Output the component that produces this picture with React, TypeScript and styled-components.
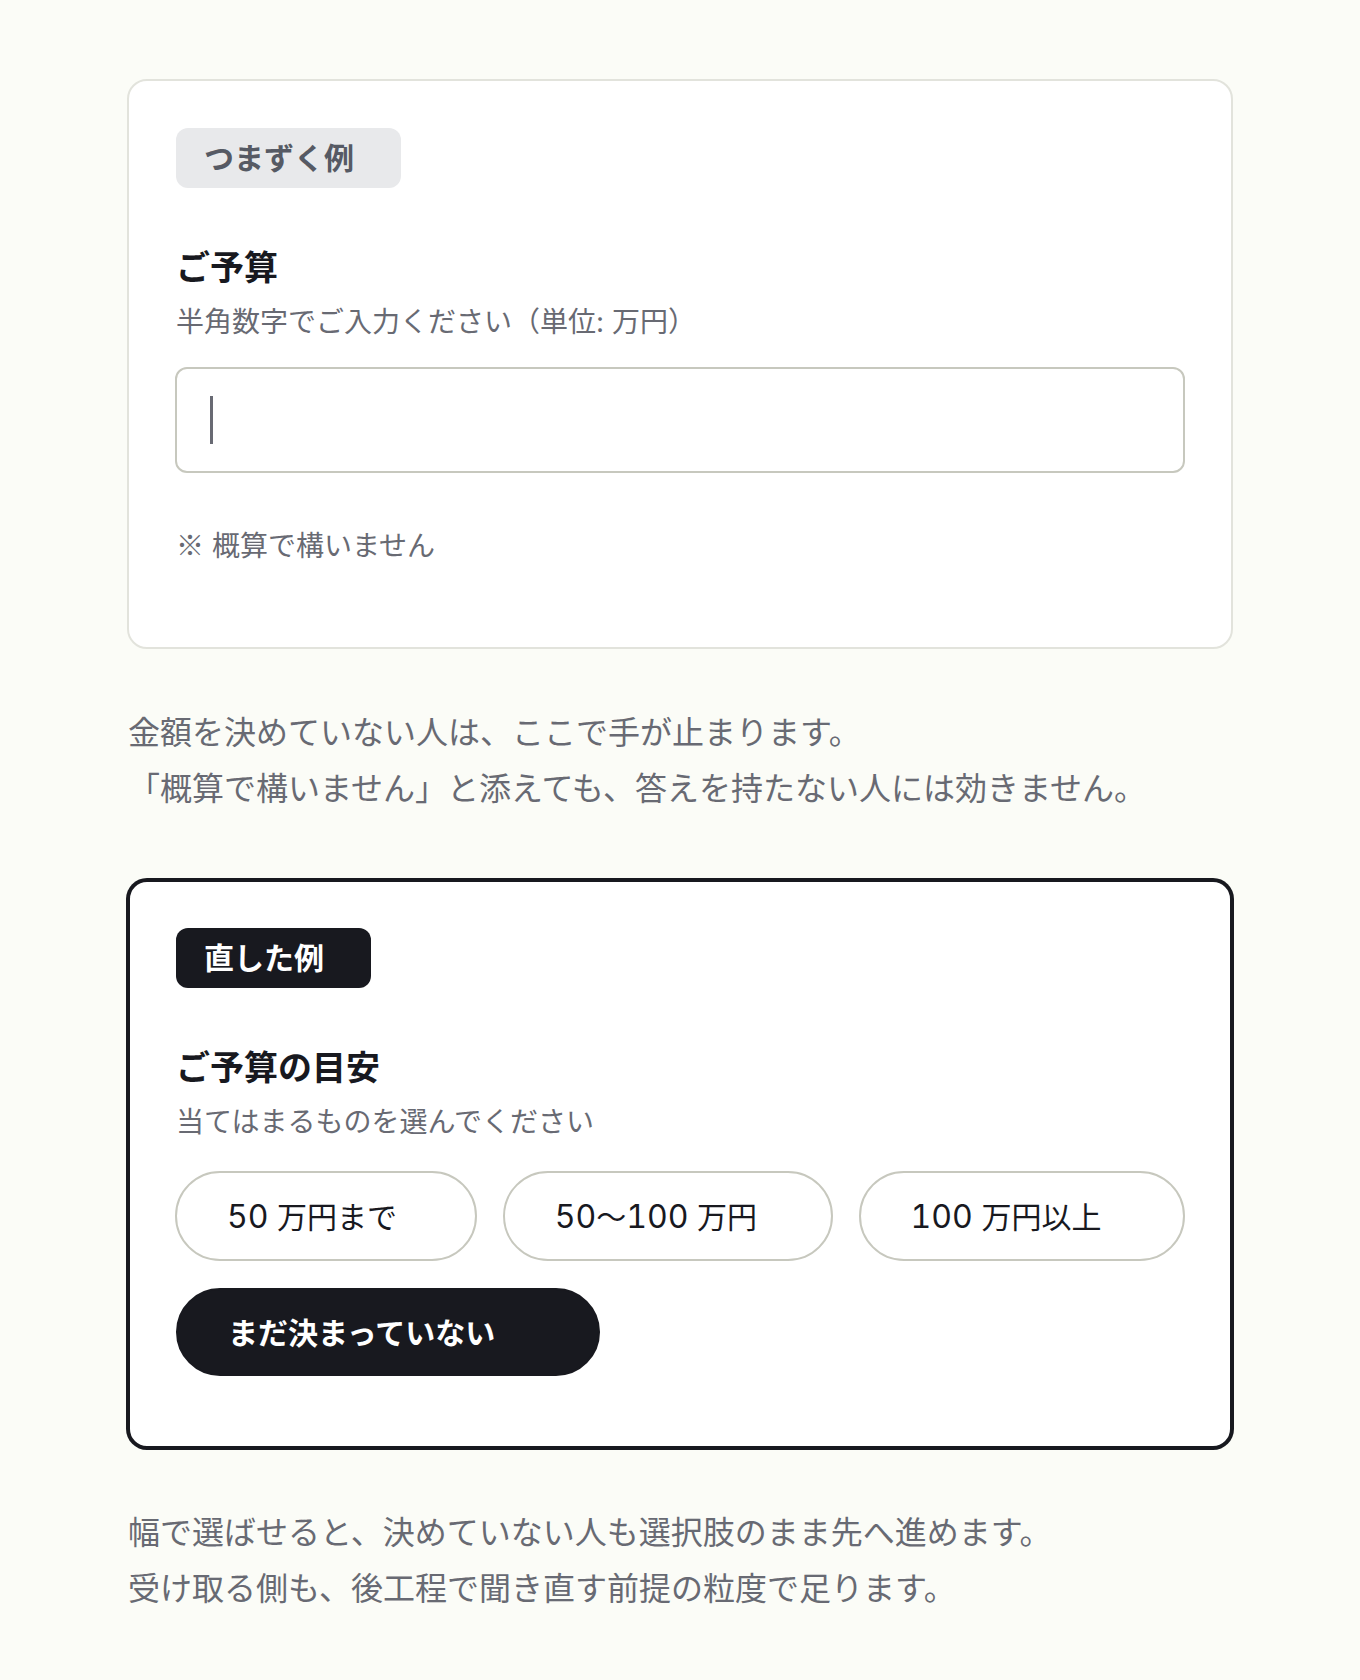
import React from 'react'
import styled, { createGlobalStyle } from 'styled-components'

const GlobalStyle = createGlobalStyle`
  :root {
    --bg: #fbfcf7;
    --card-bg: #ffffff;
    --ink: #18191f;
    --grey-text: #686a73;
    --grey-tag: #e8e9eb;
    --card-line: #e2e3dc;
    --control-line: #c7c8be;
  }

  * {
    box-sizing: border-box;
  }

  body {
    margin: 0;
    background: var(--bg);
    color: var(--ink);
    font-family: 'Noto Sans CJK JP', sans-serif;
  }
`

const Page = styled.main`
  padding: 79px 127px 60px;
`

const Example = styled.section`
  & + & {
    margin-top: 65px;
  }
`

const Card = styled.div<{ $strong?: boolean }>`
  min-height: 570px;
  padding: ${(props) => (props.$strong ? '46px' : '47px')};
  border: ${(props) => (props.$strong ? '3px solid var(--ink)' : '2px solid var(--card-line)')};
  border-radius: 20px;
  background: var(--card-bg);
  box-shadow: ${(props) => (props.$strong ? '0 0 0 1px var(--ink)' : 'none')};
`

const Tag = styled.span<{ $strong?: boolean }>`
  display: inline-block;
  padding: 0 47px 4px 28px;
  border-radius: 12px;
  background: ${(props) => (props.$strong ? 'var(--ink)' : 'var(--grey-tag)')};
  color: ${(props) => (props.$strong ? '#fff' : '#565a64')};
  font-size: 30px;
  font-weight: 700;
  line-height: 56px;
  vertical-align: top;
`

const Label = styled.label`
  display: block;
  margin-top: 54px;
  font-size: 34px;
  font-weight: 700;
  line-height: 48px;
`

const Group = styled.fieldset`
  min-width: 0;
  margin: 54px 0 0;
  padding: 0;
  border: 0;
`

const Legend = styled.legend`
  padding: 0;
  font-size: 34px;
  font-weight: 700;
  line-height: 48px;
`

const Help = styled.p`
  margin: 0;
  color: var(--grey-text);
  font-size: 28px;
  line-height: 60px;
`

const FieldBox = styled.div`
  position: relative;
  margin: 15px -1px 41px;
`

const Field = styled.input`
  display: block;
  width: 100%;
  height: 106px;
  padding: 0 34px;
  border: 2px solid var(--control-line);
  border-radius: 12px;
  outline: none;
  background: var(--card-bg);
  color: var(--grey-text);
  font: inherit;
  font-size: 30px;
`

const Caret = styled.span`
  position: absolute;
  top: 29px;
  left: 35px;
  width: 3px;
  height: 48px;
  background: var(--grey-text);
`

const Chips = styled.div`
  display: flex;
  flex-wrap: wrap;
  gap: 26px;
  margin: 21px -1px 0;
`

const Chip = styled.button<{ $end: number }>`
  height: 90px;
  padding: 0 ${(props) => props.$end}px 2px 50px;
  border: 2px solid var(--control-line);
  border-radius: 45px;
  background: var(--card-bg);
  color: var(--ink);
  font: inherit;
  font-size: 30px;
  text-align: left;
  white-space: nowrap;

  &:not(:last-child) {
    flex-grow: 1;
  }

  &[aria-pressed='true'] {
    height: 88px;
    margin: 1px;
    border-color: var(--ink);
    background: var(--ink);
    color: #fff;
    font-weight: 700;
  }
`

const Latin = styled.span`
  font-family: Inter, sans-serif;
`

const Num = styled(Latin)`
  font-size: 32px;
  font-variant-numeric: tabular-nums;
`

const Note = styled.p`
  margin: 53px 1px 0;
  color: var(--grey-text);
  font-size: 32px;
  line-height: 56px;
`

const App: React.FunctionComponent = () => {
  const [selected, setSelected] = React.useState('undecided')

  const options = [
    { id: 'under50', end: 77, label: <><Num>50 </Num>万円まで</> },
    { id: '50to100', end: 73, label: <><Num>50</Num>〜<Num>100 </Num>万円</> },
    { id: 'over100', end: 81, label: <><Num>100 </Num>万円以上</> },
    { id: 'undecided', end: 103, label: 'まだ決まっていない' },
  ]

  return (
    <>
      <GlobalStyle />
      <Page lang="ja">
        <Example>
          <Card>
            <Tag>つまずく例</Tag>
            <Label htmlFor="budget">ご予算</Label>
            <Help id="budget-help">
              半角数字でご入力ください（単位<Latin>: </Latin>万円）
            </Help>
            <FieldBox>
              <Field id="budget" type="text" inputMode="numeric" aria-describedby="budget-help" />
              <Caret />
            </FieldBox>
            <Help>
              ※<Latin> </Latin>概算で構いません
            </Help>
          </Card>
          <Note>
            金額を決めていない人は、ここで手が止まります。
            <br />
            「概算で構いません」と添えても、答えを持たない人には効きません。
          </Note>
        </Example>
        <Example>
          <Card $strong>
            <Tag $strong>直した例</Tag>
            <Group>
              <Legend>ご予算の目安</Legend>
              <Help>当てはまるものを選んでください</Help>
              <Chips>
                {options.map((option) => (
                  <Chip
                    key={option.id}
                    type="button"
                    $end={option.end}
                    aria-pressed={selected === option.id}
                    onClick={() => setSelected(option.id)}
                  >
                    {option.label}
                  </Chip>
                ))}
              </Chips>
            </Group>
          </Card>
          <Note>
            幅で選ばせると、決めていない人も選択肢のまま先へ進めます。
            <br />
            受け取る側も、後工程で聞き直す前提の粒度で足ります。
          </Note>
        </Example>
      </Page>
    </>
  )
}

export default App
